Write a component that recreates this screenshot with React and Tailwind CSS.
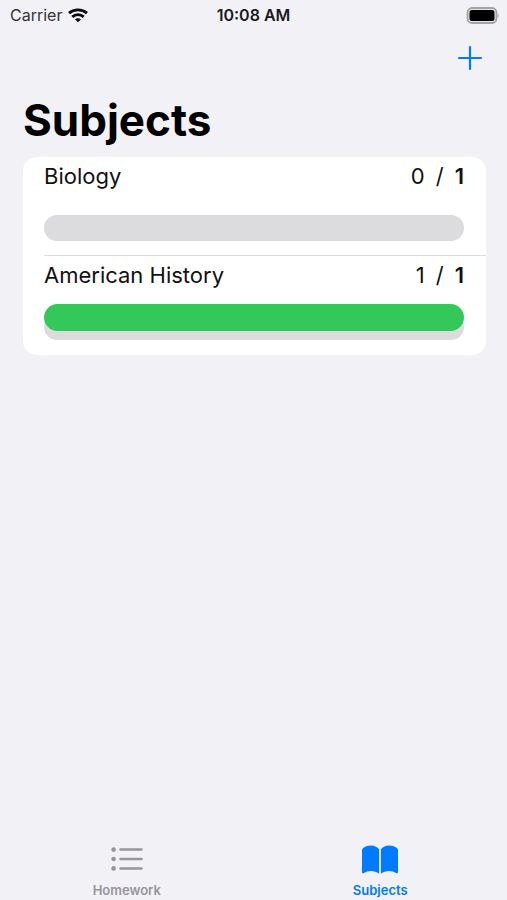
import React, { useState } from "react";

const subjects = [
  { id: 1, name: "Biology", done: 0, total: 1 },
  { id: 2, name: "American History", done: 1, total: 1 },
];

function WifiIcon() {
  return (
    <svg width="20" height="15" viewBox="0 0 20 15" fill="none" stroke="#0b0b0c" strokeWidth="2.9" aria-hidden="true">
      <path d="M1 5.2C6 .8 14 .8 19 5.2" />
      <path d="M4.3 8.8c3.3-2.9 8.1-2.9 11.4 0" />
      <path d="M10 14.3 7 11.4c1.7-1.5 4.300-1.500 6 0z" fill="#0b0b0c" stroke="none" />
    </svg>
  );
}

function BatteryIcon() {
  return (
    <svg width="33" height="17" viewBox="0 0 33 17" aria-hidden="true">
      <rect x="1.500" y="1" width="29" height="15" rx="4.5" fill="#e4e4e6" stroke="#a3a3a6" strokeWidth="1.8" />
      <rect x="3.500" y="3" width="25" height="11" rx="2.5" fill="#000" />
      <path d="M31.600 6.200c1.400.7 1.400 3.900 0 4.600z" fill="#a3a3a6" />
    </svg>
  );
}

function ListIcon() {
  return (
    <svg width="32" height="24" viewBox="0 0 32 24" aria-hidden="true">
      <g fill="currentColor">
        <circle cx="2.6" cy="2.6" r="2.3" />
        <circle cx="2.6" cy="12" r="2.3" />
        <circle cx="2.6" cy="21.4" r="2.3" />
      </g>
      <path d="M9.500 2.600h21M9.500 12h21M9.500 21.400h21" stroke="currentColor" strokeWidth="2.5" strokeLinecap="round" />
    </svg>
  );
}

function BookIcon() {
  return (
    <svg width="36" height="29" viewBox="0 0 36 29" fill="currentColor" aria-hidden="true">
      <path d="M17.1 4.2C15.2 1.7 12.4.4 9 .4 5.5.4 2.6 1.5.9 3.2.3 3.8 0 4.3 0 5.2V27c0 1.3 1 1.7 2 1 1.9-1.3 4.3-2 7-2 3 0 5.600.8 8.100 2.700z" />
      <path d="M18.9 4.2C20.8 1.7 23.6.4 27 .4c3.5 0 6.4 1.1 8.1 2.8.6.6.9 1.1.9 2V27c0 1.3-1 1.7-2 1-1.9-1.3-4.300-2-7-2-3 0-5.600.8-8.100 2.700z" />
    </svg>
  );
}

function SubjectRow({ subject }) {
  const percent = (subject.done / subject.total) * 100;

  return (
    <li className="group pl-[21px]">
      <div className="pr-[22px] pt-[3px] pb-[14px] border-b border-[#dcdcde] group-last:border-b-0 group-last:pb-[15px]">
        <div className="flex items-center justify-between text-[22px] leading-8 text-[#111111]">
          <span>{subject.name}</span>
          <span className="flex gap-[11px]">
            <span>{subject.done}</span>
            <span>/</span>
            <span className="font-semibold">{subject.total}</span>
          </span>
        </div>
        <div
          className="relative mt-[23px] h-[26px] rounded-full bg-[#dcdcde]"
          role="progressbar"
          aria-label={subject.name}
          aria-valuenow={percent}
        >
          {percent > 0 && (
            <div
              className="absolute left-0 -top-[10px] h-[27px] rounded-full bg-[#34c759]"
              style={{ width: `${percent}%` }}
            />
          )}
        </div>
      </div>
    </li>
  );
}

const tabs = [
  { id: "homework", label: "Homework", Icon: ListIcon },
  { id: "subjects", label: "Subjects", Icon: BookIcon },
];

export default function App() {
  const [active, setActive] = useState("subjects");

  return (
    <div className="min-h-screen flex flex-col bg-[#f2f1f6] font-['Inter',sans-serif] text-black">
      <div className="grid grid-cols-3 items-center h-[30px] px-2 text-base leading-5">
        <div className="flex items-center gap-[6px] pl-[2px] text-[#333336]">
          <span>Carrier</span>
          <WifiIcon />
        </div>
        <div className="text-center font-semibold text-[#1a1a1c]">10:08 AM</div>
        <div className="flex justify-end">
          <BatteryIcon />
        </div>
      </div>

      <header className="px-[23px]">
        <div className="flex justify-end h-14 items-center">
          <button type="button" aria-label="Add subject" className="text-[#007aff]">
            <svg width="26" height="26" viewBox="0 0 26 26" fill="none" stroke="currentColor" strokeWidth="2.2" strokeLinecap="round" aria-hidden="true">
              <path d="M12 2v22M1 13h22" />
            </svg>
          </button>
        </div>
        <h1 className="text-[44px] leading-[68px] font-bold">Subjects</h1>
      </header>

      <main className="flex-1 pl-[23px] pr-[21px] pt-[3px]">
        <ul className="bg-white rounded-[14px]">
          {subjects.map((s) => (
            <SubjectRow key={s.id} subject={s} />
          ))}
        </ul>
      </main>

      <nav className="grid grid-cols-2">
        {tabs.map(({ id, label, Icon }) => (
          <button
            key={id}
            type="button"
            onClick={() => setActive(id)}
            className={`flex flex-col items-center ${active === id ? "text-[#007aff]" : "text-[#96969b]"}`}
          >
            <span className="h-[42px] flex items-center">
              <Icon />
            </span>
            <span className="text-[13px] leading-5 font-semibold">{label}</span>
          </button>
        ))}
      </nav>
    </div>
  );
}
